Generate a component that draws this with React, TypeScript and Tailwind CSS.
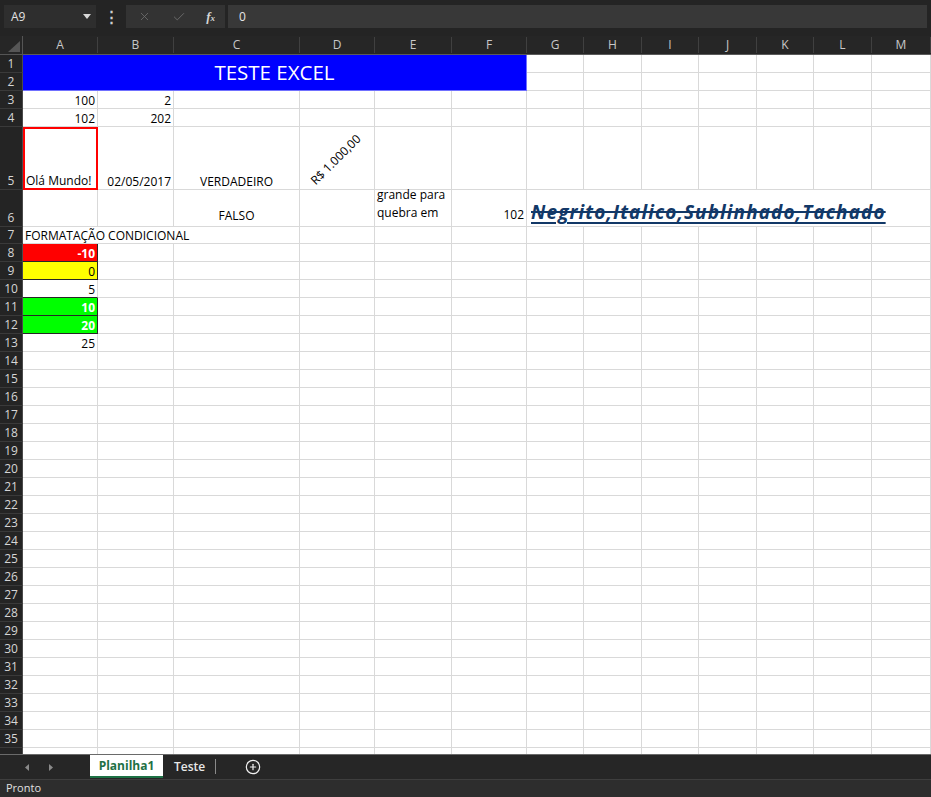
import type { ReactNode } from 'react';
import { CirclePlus, X, Check } from 'lucide-react';

const COLS = ['A', 'B', 'C', 'D', 'E', 'F', 'G', 'H', 'I', 'J', 'K', 'L', 'M'];
const ROWS = Array.from({ length: 36 }, (_, i) => i + 1);

// célula padrão: linha de grade à direita e embaixo, texto alinhado embaixo como no Excel
const base =
  'flex items-end overflow-hidden whitespace-nowrap px-[2px] text-[12px] leading-[15px] text-black border-r border-b border-[#d9d9d9]';

function Cell({ className = '', children }: { className?: string; children?: ReactNode }) {
  return <div className={`${base} ${className}`}>{children}</div>;
}

function blanks(from: string, to = 'M') {
  const a = COLS.indexOf(from);
  const b = COLS.indexOf(to);
  return COLS.slice(a, b + 1).map((c) => <Cell key={c} />);
}

function rowCells(r: number): ReactNode[] {
  switch (r) {
    case 1:
      return [
        <div
          key="A1"
          className="col-span-6 row-span-2 flex items-center justify-center border-r border-b border-[#7070ff] bg-[#0000ff] text-[20.5px] text-white"
        >
          TESTE EXCEL
        </div>,
        ...blanks('G'),
      ];
    case 2:
      return blanks('G');
    case 3:
      return [
        <Cell key="A" className="justify-end">100</Cell>,
        <Cell key="B" className="justify-end">2</Cell>,
        ...blanks('C'),
      ];
    case 4:
      return [
        <Cell key="A" className="justify-end">102</Cell>,
        <Cell key="B" className="justify-end">202</Cell>,
        ...blanks('C'),
      ];
    case 5:
      return [
        <Cell key="A" className="!border-2 !border-[#ff0000] !px-[1px]">Olá Mundo!</Cell>,
        <Cell key="B" className="justify-end">02/05/2017</Cell>,
        <Cell key="C" className="justify-center">VERDADEIRO</Cell>,
        <Cell key="D" className="!items-center justify-center !overflow-visible">
          <span className="-rotate-45 -translate-x-[2px] translate-y-[1px] leading-[17px]">R$ 1.000,00</span>
        </Cell>,
        ...blanks('E'),
      ];
    case 6:
      return [
        ...blanks('A', 'B'),
        <Cell key="C" className="justify-center pb-[3px]">FALSO</Cell>,
        <Cell key="D" />,
        <Cell key="E" className="flex-col !items-start justify-end !overflow-visible pb-[4px] !leading-[18px]">
          <span>grande para</span>
          <span>quebra em</span>
        </Cell>,
        <Cell key="F" className="justify-end pb-[4px]">102</Cell>,
        <Cell
          key="G"
          className="col-span-7 pb-[2px] pl-[4px] !text-[19px] !leading-[24px] font-bold italic tracking-[1.1px] !text-[#123867] [text-decoration-line:underline_line-through] decoration-2 underline-offset-[3px]"
        >
          Negrito,Italico,Sublinhado,Tachado
        </Cell>,
      ];
    case 7:
      return [
        <Cell key="A" className="col-span-3">FORMATAÇÃO CONDICIONAL</Cell>,
        ...blanks('D'),
      ];
    case 8:
      return [
        <Cell key="A" className="justify-end bg-[#ff0000] font-bold !text-white !border-[#262626]">-10</Cell>,
        ...blanks('B'),
      ];
    case 9:
      return [
        <Cell key="A" className="justify-end bg-[#ffff00] !border-[#262626]">0</Cell>,
        ...blanks('B'),
      ];
    case 10:
      return [
        <Cell key="A" className="justify-end !border-b-[#262626]">5</Cell>,
        ...blanks('B'),
      ];
    case 11:
      return [
        <Cell key="A" className="justify-end bg-[#00ff00] font-bold !text-white !border-[#262626]">10</Cell>,
        ...blanks('B'),
      ];
    case 12:
      return [
        <Cell key="A" className="justify-end bg-[#00ff00] font-bold !text-white !border-[#262626]">20</Cell>,
        ...blanks('B'),
      ];
    case 13:
      return [
        <Cell key="A" className="justify-end">25</Cell>,
        ...blanks('B'),
      ];
    default:
      return blanks('A');
  }
}

export default function App() {
  return (
    <div className="flex h-[797px] w-[931px] flex-col overflow-hidden bg-[#242424] font-['Open_Sans',sans-serif] text-[12px]">
      {/* barra de fórmulas */}
      <div className="flex h-[36px] shrink-0 items-start gap-[3px] px-[4px] pt-[5px]">
        <div className="flex h-[23px] w-[92px] items-center justify-between bg-[#2e2e2e] pl-[7px] pr-[5px] text-[#e2e2e2]">
          <span>A9</span>
          <svg width="8" height="5" viewBox="0 0 8 5">
            <path d="M0 0h8L4 5z" fill="#d8d8d8" />
          </svg>
        </div>
        <div className="flex h-[23px] w-[24px] items-center justify-center text-[15px] font-bold leading-none text-[#cfcfcf]">
          ⋮
        </div>
        <div className="flex h-[23px] w-[99px] items-center justify-between bg-[#333333] pl-[12px] pr-[10px]">
          <X size={13} strokeWidth={1.5} color="#6f6f6f" />
          <Check size={14} strokeWidth={1.5} color="#6f6f6f" />
          <span className="font-['Liberation_Serif',serif] text-[13px] italic font-bold text-[#d4d4d4]">
            f<span className="text-[9px]">x</span>
          </span>
        </div>
        <div className="flex h-[23px] flex-1 items-center bg-[#383838] pl-[11px] text-[#e6e6e6]">0</div>
      </div>

      {/* planilha */}
      <div className="min-h-0 flex-1 overflow-hidden bg-white">
        <div className="grid grid-cols-[23px_75px_76px_126px_75px_77px_75px_57px_58px_57px_58px_57px_58px_59px] grid-rows-[19px_repeat(4,18px)_63px_37px_17px_repeat(29,18px)]">
          <div className="flex items-end justify-end border-r border-b border-[#555] bg-[#262626] pb-[2px] pr-[2px]">
            <svg width="12" height="11" viewBox="0 0 12 11">
              <path d="M12 0v11H0z" fill="#565656" />
            </svg>
          </div>
          {COLS.map((c) => (
            <div
              key={c}
              className="flex items-end justify-center border-b border-[#5a5a5a] bg-[#262626] pb-[1px] text-[12px] text-[#c8c8c8]"
            >
              <div className="flex h-[16px] w-full items-center justify-center border-r border-[#404040]">{c}</div>
            </div>
          ))}
          {ROWS.map((r) => [
            <div
              key={`h${r}`}
              className="flex items-end justify-center border-r border-b border-r-[#4a4a4a] border-b-[#3a3a3a] bg-[#242424] text-[12px] leading-[16px] text-[#d6d6d6]"
            >
              {r < 36 ? r : ''}
            </div>,
            ...rowCells(r).map((c, i) => <div key={`${r}-${i}`} className="contents">{c}</div>),
          ])}
        </div>
      </div>

      {/* abas */}
      <div className="flex h-[25px] shrink-0 items-start border-t border-[#6a6a6a] bg-[#262626]">
        <div className="flex h-[24px] w-[90px] items-center gap-[20px] pl-[25px]">
          <svg width="4" height="7" viewBox="0 0 4 7">
            <path d="M4 0v7L0 3.5z" fill="#8a8a8a" />
          </svg>
          <svg width="4" height="7" viewBox="0 0 4 7">
            <path d="M0 0v7l4-3.5z" fill="#8a8a8a" />
          </svg>
        </div>
        <div className="flex h-[23px] w-[73px] items-center justify-center border-b-2 border-[#1e7145] bg-white text-[12px] font-bold text-[#1e7145]">
          Planilha1
        </div>
        <div className="flex h-[23px] items-center pl-[11px] pr-[10px] text-[12px] font-semibold text-[#e8e8e8]">
          Teste
        </div>
        <div className="mt-[4px] h-[15px] w-px bg-[#8a8a8a]" />
        <div className="flex h-[23px] items-center pl-[29px]">
          <CirclePlus size={16} strokeWidth={1.8} color="#f0f0f0" />
        </div>
      </div>

      {/* status */}
      <div className="flex h-[18px] shrink-0 items-center border-t border-[#3e3e3e] bg-[#2d2d2d] pl-[6px] text-[11px] text-[#e0e0e0]">
        Pronto
      </div>
    </div>
  );
}
